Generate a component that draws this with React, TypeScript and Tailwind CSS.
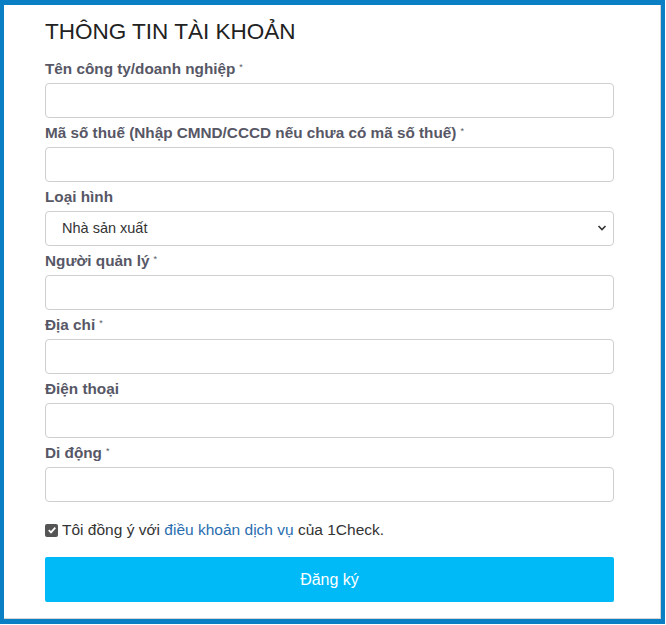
import React from "react";

const font = { fontFamily: '"Liberation Sans", Arial, sans-serif' };

function Field({ label, required }: { label: string; required?: boolean }) {
  return (
    <div className="mt-[5px]">
      <label className="block text-[15.3px] leading-5 font-bold text-[#575766] mb-1">
        {label}
        {required && <sup className="ml-1 text-[9px] font-normal text-[#575766]">*</sup>}
      </label>
      <input
        type="text"
        className="block w-full h-[35px] rounded border border-[#cfcfcf] bg-white px-3 text-[14px] outline-none"
      />
    </div>
  );
}

export default function App() {
  return (
    <div className="w-[666px] h-[625px] bg-white" style={font}>
      <div className="w-[665px] h-[624px] border-4 border-t-[5px] border-b-[5px] border-[#0b7fc4]">
        <div className="h-full border-r border-b border-[#d4d4d4] pl-[41px] pr-[46px] pt-[12px]">
          <h1 className="text-[22.5px] leading-[30px] text-[#222] mb-[12px]">THÔNG TIN TÀI KHOẢN</h1>
          <Field label="Tên công ty/doanh nghiệp" required />
          <Field label="Mã số thuế (Nhập CMND/CCCD nếu chưa có mã số thuế)" required />
          <div className="mt-[5px]">
            <label className="block text-[15.3px] leading-5 font-bold text-[#575766] mb-1">Loại hình</label>
            <div className="relative h-[35px] rounded border border-[#cfcfcf] bg-white flex items-center pl-[16px] text-[14.5px] text-[#333]">
              Nhà sản xuất
              <svg className="absolute right-[6px] top-[12px]" width="10" height="8" viewBox="0 0 10 8">
                <path d="M1.5 2 L5 5.5 L8.5 2" fill="none" stroke="#333" strokeWidth="1.6" />
              </svg>
            </div>
          </div>
          <Field label="Người quản lý" required />
          <Field label="Địa chỉ" required />
          <Field label="Điện thoại" />
          <Field label="Di động" required />
          <div className="mt-[18px] flex items-center text-[15.5px] text-[#333] leading-5">
            <span className="w-[13px] h-[13px] rounded-[2px] bg-[#555] flex items-center justify-center mr-[4px]">
              <svg width="10" height="10" viewBox="0 0 10 10">
                <path d="M1.8 5.2 L4 7.4 L8.3 2.6" fill="none" stroke="#fff" strokeWidth="1.8" />
              </svg>
            </span>
            <span>
              Tôi đồng ý với <a className="text-[#2a6eb0]">điều khoản dịch vụ</a> của 1Check.
            </span>
          </div>
          <button className="mt-[17px] w-full h-[45px] rounded-[2px] bg-[#00baf7] text-white text-[16px]">
            Đăng ký
          </button>
        </div>
      </div>
    </div>
  );
}
